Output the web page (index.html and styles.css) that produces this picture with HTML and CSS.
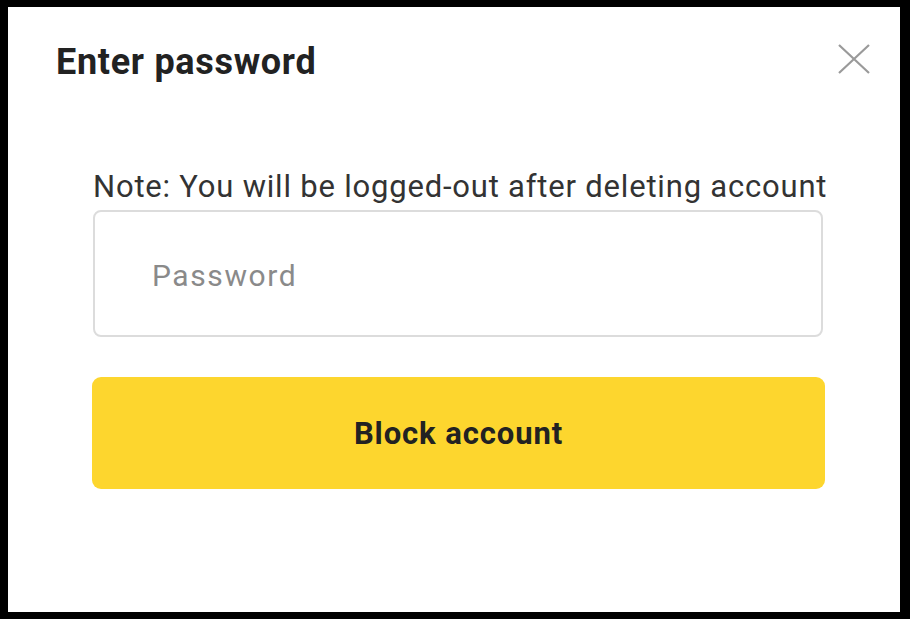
FILE: index.html
```html
<!DOCTYPE html>
<html lang="en">
<head>
<meta charset="utf-8">
<title>Enter password</title>
<link rel="stylesheet" href="styles.css">
</head>
<body>
<div class="dialog">
  <div class="header">
    <h1 class="title">Enter password</h1>
    <button class="close" aria-label="Close">
      <svg width="34" height="32" viewBox="0 0 34 32"><path d="M2 2 L32 30 M32 2 L2 30" stroke="#9a9a9a" stroke-width="2.2" fill="none"/></svg>
    </button>
  </div>
  <div class="content">
    <p class="note">Note: You will be logged-out after deleting account</p>
    <input class="field" type="password" placeholder="Password">
    <button class="primary">Block account</button>
  </div>
</div>
</body>
</html>
```
FILE: styles.css
```css
html, body {
  margin: 0;
  padding: 0;
  background: #000;
  height: 100%;
}
body {
  padding: 7px 10px 7px 8px;
  box-sizing: border-box;
  font-family: Roboto, "Liberation Sans", sans-serif;
}
.dialog {
  background: #fff;
  height: 605px;
  box-sizing: border-box;
}
.header {
  display: flex;
  justify-content: space-between;
  align-items: flex-start;
  padding: 33px 29px 0 48px;
}
.title {
  margin: 0;
  font-size: 36px;
  line-height: 44px;
  letter-spacing: 0.7px;
  font-weight: 700;
  color: #222;
}
.close {
  margin-top: 3px;
  border: 0;
  background: none;
  padding: 0;
  width: 34px;
  height: 32px;
  cursor: pointer;
}
.close svg { display: block; }
.content {
  width: 733px;
  margin: 82px 0 0 84px;
  display: flex;
  flex-direction: column;
}
.note {
  margin: 0 0 2px 1px;
  font-size: 31px;
  line-height: 42px;
  letter-spacing: 0.8px;
  color: #333;
  white-space: nowrap;
}
.field {
  margin-left: 1px;
  width: 730px;
  height: 127px;
  box-sizing: border-box;
  border: 2px solid #dcdcdc;
  border-radius: 8px;
  padding: 4px 0 0 57px;
  font-family: inherit;
  font-size: 30px;
  letter-spacing: 1.6px;
  color: #333;
  outline: none;
}
.field::placeholder {
  color: #8a8a8a;
}
.primary {
  margin-top: 40px;
  height: 112px;
  border: 0;
  border-radius: 9px;
  background: #fdd62e;
  font-family: inherit;
  font-size: 31px;
  letter-spacing: 0.9px;
  font-weight: 700;
  color: #222;
  cursor: pointer;
}
```
